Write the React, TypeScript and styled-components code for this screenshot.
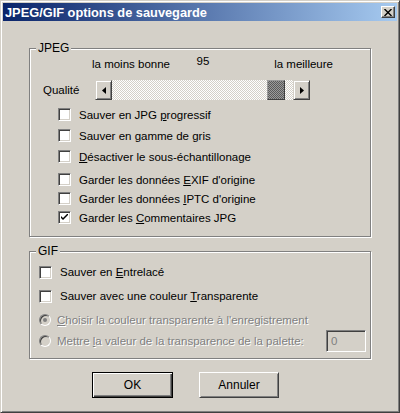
import React from 'react';
import styled, { createGlobalStyle } from 'styled-components';

const Global = createGlobalStyle`
  html, body { margin: 0; padding: 0; background: #D4D0C8; }
  body {
    font-family: "Liberation Sans", Arial, sans-serif;
    font-size: 11.5px;
    color: #000;
  }
  * { box-sizing: border-box; }
`;

const Window = styled.div`
  width: 400px;
  height: 413px;
  background: #D4D0C8;
  border: 1px solid;
  border-color: #D4D0C8 #404040 #404040 #D4D0C8;
  box-shadow: inset 1px 1px 0 #fff, inset -1px -1px 0 #808080;
  padding: 2px;
  display: flex;
  flex-direction: column;
`;

const TitleBar = styled.div`
  height: 18px;
  flex: none;
  display: flex;
  align-items: center;
  padding: 0 2px 0 2px;
  background: linear-gradient(to right, #0A246A, #A6CAF0);
  color: #fff;
  font-weight: bold;
  font-size: 12.8px;
`;

const CloseBtn = styled.div`
  margin-left: auto;
  width: 14px;
  height: 12px;
  background: #D4D0C8;
  border: 1px solid;
  border-color: #fff #404040 #404040 #fff;
  box-shadow: inset -1px -1px 0 #808080;
  display: flex;
  align-items: center;
  justify-content: center;
`;

const Body = styled.div`
  flex: 1;
  display: flex;
  flex-direction: column;
  padding: 20px 26px 0 26px;
`;

const Group = styled.fieldset<{ $pb: number; $mt?: number }>`
  margin: ${p => p.$mt ?? 0}px 0 0 0;
  padding: 0 0 ${p => p.$pb}px 0;
  min-width: 0;
  border: 1px solid #808080;
  box-shadow: inset 1px 1px 0 #fff, 1px 1px 0 #fff;
`;

const Legend = styled.legend`
  margin-left: 6px;
  padding: 0 2px;
  line-height: 14px;
  background: #D4D0C8;
  font-size: 12px;
`;

const LabelsRow = styled.div`
  display: flex;
  align-items: flex-start;
  margin-top: 3px;
  padding-left: 62px;
  line-height: 13px;
`;

const ScaleLabel = styled.span<{ $w: number; $align: string; $up?: number }>`
  width: ${p => p.$w}px;
  text-align: ${p => p.$align};
  margin-top: ${p => -(p.$up ?? 0)}px;
  white-space: nowrap;
`;

const SliderRow = styled.div`
  display: flex;
  align-items: center;
  margin-top: 9px;
  padding-left: 13px;
  height: 20px;
`;

const QualityLabel = styled.span`
  width: 52px;
`;

const ScrollBar = styled.div`
  display: flex;
  width: 215px;
  height: 20px;
`;

const ArrowBtn = styled.div`
  width: 17px;
  height: 20px;
  flex: none;
  background: #D4D0C8;
  border: 1px solid;
  border-color: #D4D0C8 #404040 #404040 #D4D0C8;
  box-shadow: inset 1px 1px 0 #fff, inset -1px -1px 0 #808080;
  display: flex;
  align-items: center;
  justify-content: center;
`;

const Track = styled.div`
  flex: 1;
  position: relative;
  background: repeating-conic-gradient(#fff 0 25%, #D4D0C8 0 50%) 0 0 / 2px 2px;
`;

const Thumb = styled.div`
  position: absolute;
  top: 0;
  bottom: 0;
  width: 18px;
  background: repeating-conic-gradient(#5a5a5a 0 25%, #9a9a9a 0 50%) 0 0 / 2px 2px;
  border: 1px solid;
  border-color: #9a9a9a #404040 #404040 #9a9a9a;
`;

const CheckList = styled.div<{ $pl: number; $mt: number }>`
  display: flex;
  flex-direction: column;
  padding-left: ${p => p.$pl}px;
  margin-top: ${p => p.$mt}px;
`;

const Row = styled.div<{ $h: number; $mt?: number; $disabled?: boolean; $pr?: number }>`
  display: flex;
  align-items: center;
  gap: 8px;
  height: ${p => p.$h}px;
  margin-top: ${p => p.$mt ?? 0}px;
  padding-right: ${p => p.$pr ?? 0}px;
  white-space: nowrap;
  color: ${p => (p.$disabled ? '#808080' : '#000')};
  text-shadow: ${p => (p.$disabled ? '1px 1px 0 #fff' : 'none')};
`;

const CheckBox = styled.span`
  width: 13px;
  height: 13px;
  flex: none;
  background: #fff;
  border: 1px solid;
  border-color: #808080 #fff #fff #808080;
  box-shadow: inset 1px 1px 0 #404040, inset -1px -1px 0 #D4D0C8;
  display: flex;
  align-items: center;
  justify-content: center;
`;

const Radio = styled.span`
  width: 12px;
  height: 12px;
  flex: none;
  margin-right: -2px;
  border-radius: 50%;
  background: #D4D0C8;
  border: 1px solid;
  border-color: #808080 #fff #fff #808080;
  box-shadow: inset 1px 1px 0 #404040;
  display: flex;
  align-items: center;
  justify-content: center;
`;

const Dot = styled.span`
  width: 4px;
  height: 4px;
  border-radius: 50%;
  background: #808080;
`;

const Key = styled.u`
  text-decoration: underline;
`;

const TextField = styled.div`
  margin-left: auto;
  width: 40px;
  height: 22px;
  border: 1px solid;
  border-color: #808080 #fff #fff #808080;
  box-shadow: inset 1px 1px 0 #404040, inset -1px -1px 0 #D4D0C8;
  background: #D4D0C8;
  color: #808080;
  text-shadow: none;
  padding: 3px 0 0 4px;
  line-height: 14px;
`;

const ButtonRow = styled.div`
  display: flex;
  gap: 26px;
  margin-top: 13px;
  padding-left: 63px;
`;

const Button = styled.div<{ $default?: boolean; $w: number }>`
  width: ${p => p.$w}px;
  height: 26px;
  display: flex;
  align-items: center;
  justify-content: center;
  background: #D4D0C8;
  border: 1px solid;
  border-color: ${p => (p.$default ? '#000' : '#fff #404040 #404040 #fff')};
  box-shadow: ${p =>
    p.$default
      ? 'inset 1px 1px 0 #fff, inset -1px -1px 0 #404040, inset -2px -2px 0 #808080'
      : 'inset 1px 1px 0 #D4D0C8, inset -1px -1px 0 #808080'};
  font-size: 12px;
`;

const LeftArrow = () => (
  <svg width="4" height="7" viewBox="0 0 4 7">
    <path d="M4 0 L0 3.5 L4 7 Z" fill="#000" />
  </svg>
);

const RightArrow = () => (
  <svg width="4" height="7" viewBox="0 0 4 7">
    <path d="M0 0 L4 3.5 L0 7 Z" fill="#000" />
  </svg>
);

const CheckMark = () => (
  <svg width="7" height="7" viewBox="0 0 7 7">
    <path d="M0 2 L0 4 L2 6 L7 1 L7 -1 L2 4 Z" fill="#000" />
  </svg>
);

const CloseGlyph = () => (
  <svg width="8" height="7" viewBox="0 0 8 7">
    <path d="M0.5 0 L7.5 7 M7.5 0 L0.5 7" stroke="#000" strokeWidth="1.4" />
  </svg>
);

const quality = 95;

export default function App() {
  const trackW = 215 - 34;
  const thumbLeft = Math.round((trackW - 18) * (quality / 100));
  return (
    <>
      <Global />
      <Window>
        <TitleBar>
          JPEG/GIF options de sauvegarde
          <CloseBtn>
            <CloseGlyph />
          </CloseBtn>
        </TitleBar>
        <Body>
          <Group $pb={9}>
            <Legend>JPEG</Legend>
            <LabelsRow>
              <ScaleLabel $w={104} $align="left">la moins bonne</ScaleLabel>
              <ScaleLabel $w={14} $align="center" $up={3}>{quality}</ScaleLabel>
              <ScaleLabel $w={123} $align="right">la meilleure</ScaleLabel>
            </LabelsRow>
            <SliderRow>
              <QualityLabel>Qualité</QualityLabel>
              <ScrollBar>
                <ArrowBtn><LeftArrow /></ArrowBtn>
                <Track>
                  <Thumb style={{ left: thumbLeft }} />
                </Track>
                <ArrowBtn><RightArrow /></ArrowBtn>
              </ScrollBar>
            </SliderRow>
            <CheckList $pl={28} $mt={4}>
              <Row $h={21}><CheckBox /><span>Sauver en JPG <Key>p</Key>rogressif</span></Row>
              <Row $h={21}><CheckBox /><span>Sauver en <Key>g</Key>amme de gris</span></Row>
              <Row $h={21}><CheckBox /><span><Key>D</Key>ésactiver le sous-échantillonage</span></Row>
              <Row $h={19} $mt={3}><CheckBox /><span>Garder les données <Key>E</Key>XIF d'origine</span></Row>
              <Row $h={19}><CheckBox /><span>Garder les données <Key>I</Key>PTC d'origine</span></Row>
              <Row $h={19}><CheckBox><CheckMark /></CheckBox><span>Garder les <Key>C</Key>ommentaires JPG</span></Row>
            </CheckList>
          </Group>
          <Group $pb={6} $mt={7}>
            <Legend>GIF</Legend>
            <CheckList $pl={9} $mt={2}>
              <Row $h={24}><CheckBox /><span>Sauver en <Key>E</Key>ntrelacé</span></Row>
              <Row $h={24}><CheckBox /><span>Sauver avec une couleur <Key>T</Key>ransparente</span></Row>
              <Row $h={20} $mt={2} $disabled><Radio><Dot /></Radio><span><Key>C</Key>hoisir la couleur transparente à l'enregistrement</span></Row>
              <Row $h={22} $disabled $pr={4}><Radio /><span>Mettre <Key>l</Key>a valeur de la transparence de la palette:</span><TextField>0</TextField></Row>
            </CheckList>
          </Group>
          <ButtonRow>
            <Button $default $w={81}>OK</Button>
            <Button $w={80}>Annuler</Button>
          </ButtonRow>
        </Body>
      </Window>
    </>
  );
}
